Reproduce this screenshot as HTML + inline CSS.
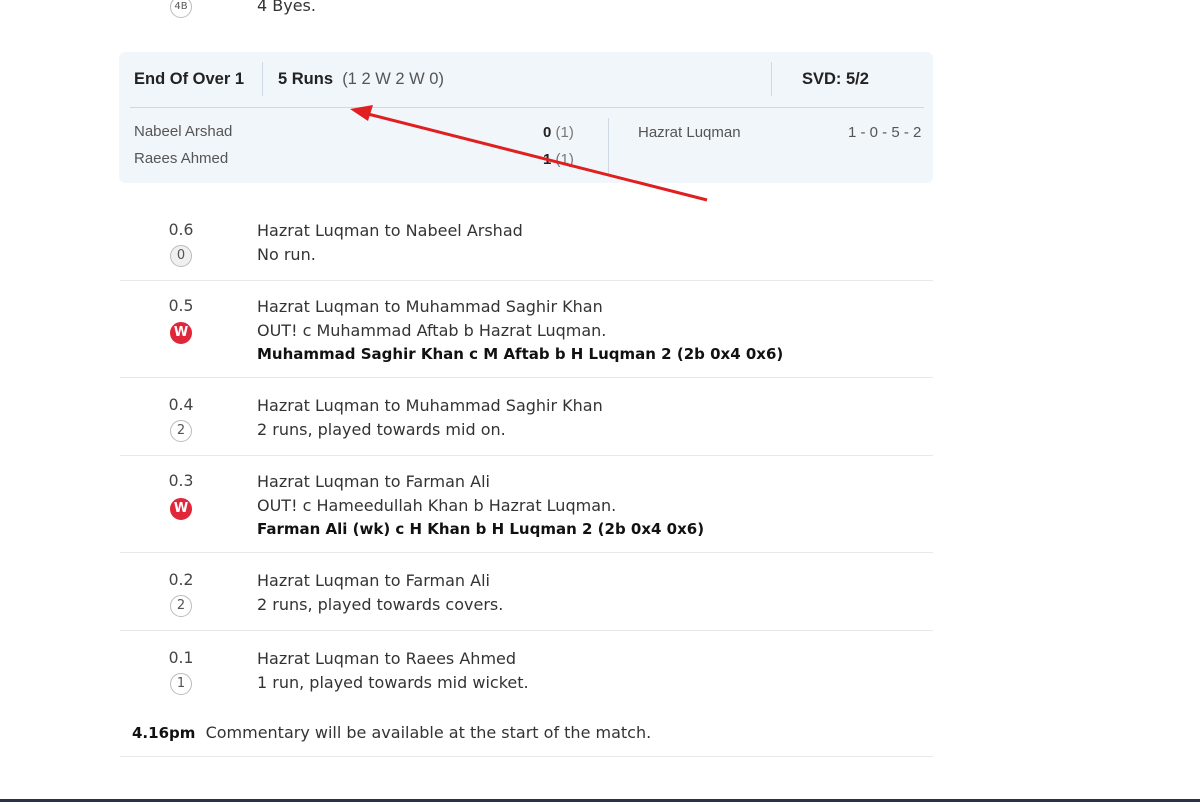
<!DOCTYPE html>
<html><head><meta charset="utf-8"><style>
body{margin:0;width:1200px;height:802px;background:#fff;position:relative;overflow:hidden;font-family:"DejaVu Sans","Liberation Sans",sans-serif;color:#333;}
.a{position:absolute;white-space:nowrap;}
.t{font-size:16px;}
.b{font-weight:bold;color:#111;}
.t.b{font-size:15px;}
.ov{font-size:15.6px;color:#444;width:60px;text-align:center;}
.c{position:absolute;width:22px;height:22px;border-radius:50%;border:1px solid #bbb;box-sizing:border-box;font-size:13px;text-align:center;line-height:20px;color:#555;background:#fff;}
.w{background:#e0273a;border-color:#e0273a;color:#fff;font-weight:bold;}
.hr{position:absolute;left:120px;width:813px;height:1px;background:#e8e8e8;}
.box{position:absolute;left:119px;top:52px;width:814px;height:131px;background:#f1f6fb;border-radius:6px;font-family:"Liberation Sans",sans-serif;}
.box .a{font-size:15px;}
</style></head><body>
<div class="c" style="left:170px;top:-4px;font-size:10px;">4B</div>
<div class="a t" style="left:257px;top:-4px;">4 Byes.</div>

<div class="box">
 <div class="a b" style="left:15px;top:18px;font-size:16.5px;color:#222;">End Of Over 1</div>
 <div style="position:absolute;left:143px;top:10px;width:1px;height:34px;background:#cfd9e3"></div>
 <div class="a" style="left:159px;top:18px;font-size:16.5px;"><b style="color:#222">5 Runs</b> &nbsp;<span style="color:#555">(1 2 W 2 W 0)</span></div>
 <div style="position:absolute;left:652px;top:10px;width:1px;height:34px;background:#cfd9e3"></div>
 <div class="a b" style="left:683px;top:18px;font-size:16.5px;color:#222;">SVD: 5/2</div>
 <div style="position:absolute;left:11px;top:55px;width:794px;height:1px;background:#cfd9e3"></div>
 <div class="a" style="left:15px;top:71px;color:#555;">Nabeel Arshad</div>
 <div class="a" style="left:15px;top:98px;color:#555;">Raees Ahmed</div>
 <div class="a" style="left:424px;top:72px;"><b style="color:#222">0</b> <span style="color:#777">(1)</span></div>
 <div class="a" style="left:424px;top:99px;"><b style="color:#222">1</b> <span style="color:#777">(1)</span></div>
 <div style="position:absolute;left:489px;top:66px;width:1px;height:56px;background:#cfd9e3"></div>
 <div class="a" style="left:519px;top:72px;color:#555;">Hazrat Luqman</div>
 <div class="a" style="left:729px;top:72px;color:#555;">1 - 0 - 5 - 2</div>
</div>

<svg style="position:absolute;left:0;top:0" width="1200" height="802"><line x1="707" y1="200" x2="368" y2="114" stroke="#e02020" stroke-width="3"/><polygon points="350,109 373,105 368,121" fill="#e02020"/></svg>

<div class="a ov" style="left:151px;top:221px;">0.6</div><div class="c" style="left:170px;top:245px;background:#f0f0f0">0</div>
<div class="a t" style="left:257px;top:221px;">Hazrat Luqman to Nabeel Arshad</div>
<div class="a t" style="left:257px;top:245px;">No run.</div>
<div class="hr" style="top:280px"></div>

<div class="a ov" style="left:151px;top:297px;">0.5</div><div class="c w" style="left:170px;top:322px">W</div>
<div class="a t" style="left:257px;top:297px;">Hazrat Luqman to Muhammad Saghir Khan</div>
<div class="a t" style="left:257px;top:321px;">OUT! c Muhammad Aftab b Hazrat Luqman.</div>
<div class="a t b" style="left:257px;top:345px;">Muhammad Saghir Khan c M Aftab b H Luqman 2 (2b 0x4 0x6)</div>
<div class="hr" style="top:377px"></div>

<div class="a ov" style="left:151px;top:396px;">0.4</div><div class="c" style="left:170px;top:420px">2</div>
<div class="a t" style="left:257px;top:396px;">Hazrat Luqman to Muhammad Saghir Khan</div>
<div class="a t" style="left:257px;top:420px;">2 runs, played towards mid on.</div>
<div class="hr" style="top:455px"></div>

<div class="a ov" style="left:151px;top:472px;">0.3</div><div class="c w" style="left:170px;top:498px">W</div>
<div class="a t" style="left:257px;top:472px;">Hazrat Luqman to Farman Ali</div>
<div class="a t" style="left:257px;top:496px;">OUT! c Hameedullah Khan b Hazrat Luqman.</div>
<div class="a t b" style="left:257px;top:520px;">Farman Ali (wk) c H Khan b H Luqman 2 (2b 0x4 0x6)</div>
<div class="hr" style="top:552px"></div>

<div class="a ov" style="left:151px;top:571px;">0.2</div><div class="c" style="left:170px;top:595px">2</div>
<div class="a t" style="left:257px;top:571px;">Hazrat Luqman to Farman Ali</div>
<div class="a t" style="left:257px;top:595px;">2 runs, played towards covers.</div>
<div class="hr" style="top:630px"></div>

<div class="a ov" style="left:151px;top:649px;">0.1</div><div class="c" style="left:170px;top:673px">1</div>
<div class="a t" style="left:257px;top:649px;">Hazrat Luqman to Raees Ahmed</div>
<div class="a t" style="left:257px;top:673px;">1 run, played towards mid wicket.</div>

<div class="a" style="left:132px;top:723px;font-size:16px;"><b style="color:#111;font-size:15px">4.16pm</b>&nbsp; Commentary will be available at the start of the match.</div>
<div class="hr" style="top:756px"></div>
<div style="position:absolute;left:0;top:799px;width:1200px;height:3px;background:#2a2f4a"></div>
</body></html>
